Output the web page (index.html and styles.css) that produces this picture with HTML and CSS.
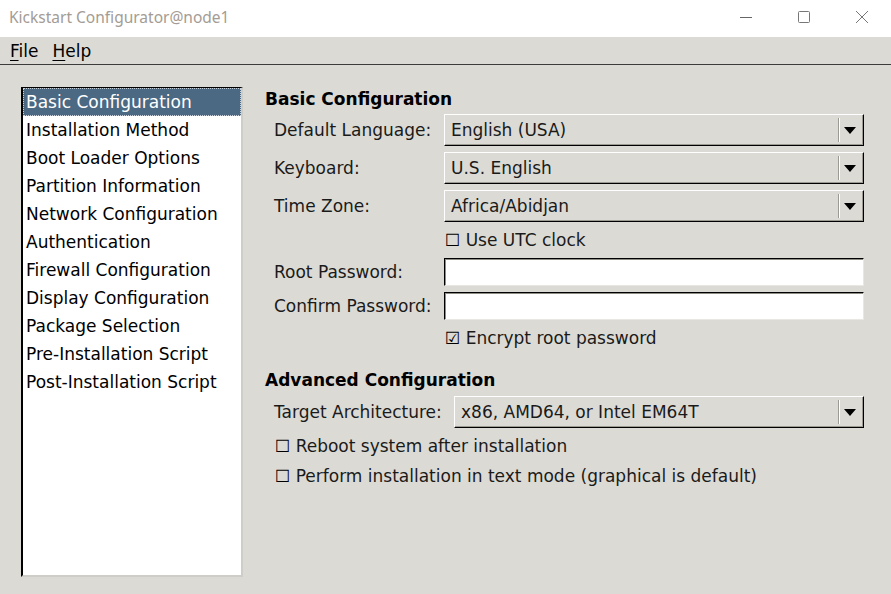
FILE: index.html
```html
<!DOCTYPE html>
<html>
<head>
<meta charset="utf-8">
<link rel="stylesheet" href="styles.css">
</head>
<body>
<div class="window">
  <div class="titlebar">
    <span class="title">Kickstart Configurator@node1</span>
    <div class="controls">
      <svg class="ctl" width="14" height="14" viewBox="0 0 14 14"><path d="M1 7.5H13" stroke="#666" stroke-width="1"/></svg>
      <svg class="ctl" width="14" height="14" viewBox="0 0 14 14"><rect x="1.5" y="1.5" width="11" height="11" rx="1" fill="none" stroke="#777" stroke-width="1"/></svg>
      <svg class="ctl" width="14" height="14" viewBox="0 0 14 14"><path d="M1 1L13 13M13 1L1 13" stroke="#777" stroke-width="1"/></svg>
    </div>
  </div>
  <div class="menubar">
    <span class="menu"><u>F</u>ile</span>
    <span class="menu"><u>H</u>elp</span>
  </div>
  <div class="main">
    <div class="listbox">
      <div class="item selected">Basic Configuration</div>
      <div class="item">Installation Method</div>
      <div class="item">Boot Loader Options</div>
      <div class="item">Partition Information</div>
      <div class="item">Network Configuration</div>
      <div class="item">Authentication</div>
      <div class="item">Firewall Configuration</div>
      <div class="item">Display Configuration</div>
      <div class="item">Package Selection</div>
      <div class="item">Pre-Installation Script</div>
      <div class="item">Post-Installation Script</div>
    </div>
    <div class="panel">
      <div class="heading">Basic Configuration</div>
      <div class="form basic">
        <div class="label">Default Language:</div>
        <div class="combo"><span class="ctext">English (USA)</span><span class="sep"></span><span class="arrow"></span></div>
        <div class="label">Keyboard:</div>
        <div class="combo"><span class="ctext">U.S. English</span><span class="sep"></span><span class="arrow"></span></div>
        <div class="label">Time Zone:</div>
        <div class="combo"><span class="ctext">Africa/Abidjan</span><span class="sep"></span><span class="arrow"></span></div>
        <div class="spacer"></div>
        <div class="check utc"><span class="box">☐</span> Use UTC clock</div>
        <div class="label">Root Password:</div>
        <div class="entry pw1"></div>
        <div class="label">Confirm Password:</div>
        <div class="entry"></div>
        <div class="spacer"></div>
        <div class="check enc"><span class="box">☑</span> Encrypt root password</div>
      </div>
      <div class="heading adv">Advanced Configuration</div>
      <div class="form advanced">
        <div class="label">Target Architecture:</div>
        <div class="combo"><span class="ctext">x86, AMD64, or Intel EM64T</span><span class="sep"></span><span class="arrow"></span></div>
      </div>
      <div class="check opt reboot"><span class="box">☐</span> Reboot system after installation</div>
      <div class="check opt text"><span class="box">☐</span> Perform installation in text mode (graphical is default)</div>
    </div>
  </div>
</div>
</body>
</html>
```

FILE: styles.css
```css
* { box-sizing: border-box; }
html, body { margin: 0; padding: 0; }
body {
  width: 891px;
  height: 594px;
  overflow: hidden;
  background: #dcdad5;
  font-family: "DejaVu Sans", sans-serif;
  font-size: 17px;
  color: #1a1a1a;
}
.window { width: 891px; height: 594px; display: flex; flex-direction: column; }
.titlebar {
  height: 37px;
  background: #ffffff;
  display: flex;
  align-items: center;
  justify-content: space-between;
  padding-left: 9px;
}
.title {
  font-family: "Noto Sans", sans-serif;
  font-size: 15.5px;
  color: #a39c95;
  margin-top: -3px;
}
.controls { display: flex; align-items: center; margin-right: 22px; margin-top: -4px; }
.ctl { margin-left: 44px; }
.controls .ctl:first-child { margin-left: 0; }
.menubar {
  height: 28px;
  border-bottom: 1px solid #3c3c3c;
  display: flex;
  align-items: center;
  padding-left: 10px;
  gap: 14px;
  color: #000;
}
.menu u { text-decoration-thickness: 1px; text-underline-offset: 3px; }
.main {
  flex: 1;
  display: flex;
  padding: 22px 0 0 21px;
  align-items: flex-start;
}
.listbox {
  width: 222px;
  height: 490px;
  background: #fff;
  border-top: 1px solid #000;
  border-left: 2px solid #000;
  border-right: 2px solid #cfcdc8;
  border-bottom: 2px solid #cfcdc8;
  color: #000;
}
.item {
  height: 28px;
  line-height: 28px;
  padding-left: 3px;
  white-space: nowrap;
}
.item.selected {
  background: #4b6983;
  color: #fff;
  outline: 1px dotted #c9d4de;
  outline-offset: -1px;
}
.panel {
  margin-left: 22px;
  padding-top: 1px;
  width: 600px;
  display: flex;
  flex-direction: column;
  color: #000;
}
.heading {
  font-weight: bold;
  height: 20px;
  line-height: 20px;
  margin-top: 1px;
  color: #000;
}
.heading.adv { margin-top: 22px; }
.form {
  display: grid;
  padding-left: 9px;
  align-items: center;
}
.form.basic {
  grid-template-columns: 170px 420px;
  margin-top: 5px;
  row-gap: 6px;
}
.form.advanced {
  grid-template-columns: 180px 410px;
  margin-top: 6px;
}
.label { color: #1a1a1a; white-space: nowrap; }
.combo {
  height: 32px;
  display: flex;
  align-items: center;
  background: #dcdad5;
  border-top: 1px solid #fff;
  border-left: 1px solid #fff;
  border-right: 1px solid #000;
  border-bottom: 1px solid #000;
  box-shadow: inset -1px -1px 0 #9d9a93;
  padding-left: 6px;
  color: #1a1a1a;
}
.ctext { flex: 1; white-space: nowrap; }
.sep {
  width: 2px;
  height: 24px;
  border-left: 1px solid #9d9a93;
  border-right: 1px solid #fff;
  margin-right: 4px;
}
.arrow {
  width: 0; height: 0;
  border-left: 6px solid transparent;
  border-right: 6px solid transparent;
  border-top: 7px solid #000;
  margin-right: 7px;
}
.check {
  height: 20px;
  line-height: 20px;
  white-space: nowrap;
  color: #1a1a1a;
}
.check .box { font-size: 17px; color: #000; }
.check.utc { margin-top: 2px; margin-left: 1px; margin-bottom: 2px; }
.check.enc { margin-top: 2px; margin-left: 1px; }
.entry {
  height: 28px;
  background: #fff;
  border-top: 1px solid #000;
  border-left: 1px solid #000;
  border-right: 1px solid #e8e7e4;
  border-bottom: 1px solid #e8e7e4;
  box-shadow: inset 1px 1px 0 #8f8c86;
}
.check.opt { margin-left: 10px; }
.check.reboot { margin-top: 8px; }
.check.text { margin-top: 10px; }
```
